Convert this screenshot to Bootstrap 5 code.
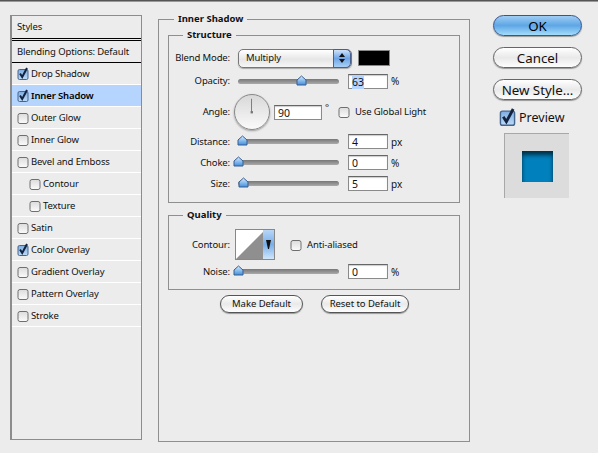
<!DOCTYPE html>
<html lang="en">
<head>
<meta charset="utf-8">
<title>Layer Style</title>
<link href="https://cdn.jsdelivr.net/npm/bootstrap@5.3.0/dist/css/bootstrap.min.css" rel="stylesheet">
<style>
html,body{height:100%}
body{background:#ececec;color:#111;font-family:"Noto Sans","DejaVu Sans",sans-serif;font-size:9.5px;letter-spacing:-.13px;line-height:12px;overflow:hidden;white-space:nowrap}
.dlg{width:598px;height:453px;border-top:1px solid #555;box-shadow:inset 0 1px 0 #999}
.side{width:132px;height:425px;margin:14px 0 0 10px;border:1px solid #8c8c8c;border-left-width:2px;flex:none}
.side-head{height:23px;padding-left:5px;border-bottom:1px solid #000}
.side-blend{height:23px;margin-top:1px;padding-left:5px;border-top:1px solid #000;border-bottom:1px solid #000}
.item{height:22px;padding-left:5px;border-bottom:1px solid #fff;gap:2px}
.item.sub{padding-left:17px}
.item.sel{background:#b5d5ff;font-weight:600;color:#000}
.cb{width:12px;height:12px;flex:none;display:block;overflow:visible}
.centre{width:312px;margin:12px 0 0 16px;flex:none}
fieldset.grp{border:1px solid #8f8f8f;padding:4px 9px 0;margin:0;min-width:0}
fieldset.grp legend{float:none;width:auto;font-size:9.5px;letter-spacing:0;line-height:12px;font-weight:700;margin:0 0 0 6px;padding:0 4px;color:#111}
fieldset.outer{height:429px}
fieldset.box{padding:6px 0 0;height:174px;margin:0}
fieldset.box legend{margin-left:14px}
fieldset.box2{height:81px;margin-top:6px;padding-top:7px}
.rw{display:flex;align-items:center}
.lab{width:61px;text-align:right;flex:none}
.r1{height:22px}.r2{height:24px}.r3{height:38px}.r4{height:21px}.r5{height:33px}
.sel-blend{width:114px;height:19px;margin-left:8px;border:1px solid #777;border-radius:5px;background:linear-gradient(#fff,#e6e6e6 55%,#f6f6f6);padding-left:7px;position:relative;box-shadow:0 1px 1px #aaa;flex:none}
.sel-arrow{position:absolute;right:0;top:-1px;bottom:-1px;width:18px;border:1px solid #4a5f8c;border-radius:0 5px 5px 0;background:linear-gradient(#cfe3fb,#6ea4e6 50%,#a9d0f6);display:flex;align-items:center;justify-content:center}
.swatch{width:32px;height:16px;background:#000;border:1px solid #888;margin-left:6px;flex:none}
.track{width:101px;height:5px;margin-left:8px;border-radius:3px;background:linear-gradient(#777,#aaa);position:relative;flex:none}
.thumb{position:absolute;top:-4px;width:11px;height:11px;display:block}
.num{width:40px;height:15px;margin-left:9px;background:#fff;border:1px solid #8a8a8a;border-top-color:#666;box-shadow:inset 0 1px 1px #ccc;padding-left:3px;line-height:14px;font-size:10.5px;letter-spacing:0;flex:none}
.hl{background:#b5d5ff}
.unit{margin-left:3px;font-size:10px;letter-spacing:0}
.dial{width:36px;height:36px;margin-left:4px;border-radius:50%;border:1px solid #888;background:linear-gradient(#d8d8d8,#fafafa);box-shadow:0 1px 2px #999;flex:none;display:block}
.num2{width:48px;margin-left:4px}
.deg{margin:-8px 0 0 3px}
.ck-wrap{margin-left:9px;gap:5px}
.ck-wide{margin-left:15px}
.contour{width:40px;height:31px;margin-left:5px;border:1px solid #888;display:flex;background:#fff;flex:none}
.contour svg{flex:none;display:block}
.contour-btn{flex:1;background:linear-gradient(#b8d6f7,#78aeea 50%,#cfe6fb);display:flex;align-items:center;justify-content:center}
.pill{border:1px solid #555;border-radius:10px;background:linear-gradient(#fff,#e9e9e9 50%,#fdfdfd);box-shadow:0 1px 1px #999;color:#111;padding:0;font-size:9.5px;letter-spacing:-.05px;line-height:16px;height:18px}
.foot{margin-top:5px;padding-left:52px;gap:18px}
.pill.mk{width:83px}.pill.rs{width:88px}
.right{width:89px;margin:14px 0 0 23px;flex:none}
.big{width:89px;height:21px;font-size:13.3px;letter-spacing:0;line-height:18px;border-radius:11px;margin-bottom:11px;border-color:#666}
.big.ok{background:linear-gradient(#9fcdf4,#5ea6e6 50%,#a3dcfb);border-color:#38568c;color:#000}
.prev{margin:-2px 0 0 6px;gap:3px;font-size:12.5px;letter-spacing:0;line-height:16px}
.prev .cb{width:17px;height:17px}
.pbox{width:65px;height:65px;margin:7px 0 0 11px;background:#dcdcdc;border:1px solid #a8a8a8;border-width:1px 0 0 1px;display:flex;align-items:center;justify-content:center}
.psq{width:31px;height:31px;background:#0080bd;box-shadow:inset 0 4px 4px rgba(0,0,0,.63)}
</style>
</head>
<body>
<svg width="0" height="0" class="d-block" aria-hidden="true">
<defs>
<linearGradient id="gu" x1="0" y1="0" x2="0" y2="1"><stop offset="0" stop-color="#dcdcdc"/><stop offset="1" stop-color="#fbfbfb"/></linearGradient>
<linearGradient id="gc" x1="0" y1="0" x2="0" y2="1"><stop offset="0" stop-color="#7fade2"/><stop offset="1" stop-color="#bcdcf8"/></linearGradient>
<linearGradient id="gt" x1="0" y1="0" x2="0" y2="1"><stop offset="0" stop-color="#d8ecff"/><stop offset="1" stop-color="#3f8fdc"/></linearGradient>
<symbol id="off" viewBox="0 0 12 12"><rect x="1" y="1.500" width="10" height="10" rx="2" fill="url(#gu)" stroke="#6f6f6f"/></symbol>
<symbol id="on" viewBox="0 0 12 12" overflow="visible"><rect x="1" y="1.500" width="10" height="10" rx="1.500" fill="url(#gc)" stroke="#45658f"/><path d="M3 5.500 5.200 9 10 0" fill="none" stroke="#14233f" stroke-width="2"/></symbol>
<symbol id="th" viewBox="0 0 11 11"><path d="M5.500 1 10 5v5H1V5z" fill="url(#gt)" stroke="#3a5d90"/></symbol>
</defs>
</svg>
<div class="dlg d-flex">
  <div class="side">
    <div class="side-head d-flex align-items-center">Styles</div>
    <div class="side-blend d-flex align-items-center">Blending Options: Default</div>
    <div class="item d-flex align-items-center"><svg class="cb"><use href="#on"/></svg>Drop Shadow</div>
    <div class="item sel d-flex align-items-center"><svg class="cb"><use href="#on"/></svg>Inner Shadow</div>
    <div class="item d-flex align-items-center"><svg class="cb"><use href="#off"/></svg>Outer Glow</div>
    <div class="item d-flex align-items-center"><svg class="cb"><use href="#off"/></svg>Inner Glow</div>
    <div class="item d-flex align-items-center"><svg class="cb"><use href="#off"/></svg>Bevel and Emboss</div>
    <div class="item sub d-flex align-items-center"><svg class="cb"><use href="#off"/></svg>Contour</div>
    <div class="item sub d-flex align-items-center"><svg class="cb"><use href="#off"/></svg>Texture</div>
    <div class="item d-flex align-items-center"><svg class="cb"><use href="#off"/></svg>Satin</div>
    <div class="item d-flex align-items-center"><svg class="cb"><use href="#on"/></svg>Color Overlay</div>
    <div class="item d-flex align-items-center"><svg class="cb"><use href="#off"/></svg>Gradient Overlay</div>
    <div class="item d-flex align-items-center"><svg class="cb"><use href="#off"/></svg>Pattern Overlay</div>
    <div class="item d-flex align-items-center"><svg class="cb"><use href="#off"/></svg>Stroke</div>
  </div>
  <div class="centre">
    <fieldset class="grp outer">
      <legend>Inner Shadow</legend>
      <fieldset class="grp box">
        <legend>Structure</legend>
        <div class="rw r1"><span class="lab">Blend Mode:</span>
          <div class="sel-blend d-flex align-items-center">Multiply<span class="sel-arrow"><svg width="8" height="12" viewBox="0 0 8 12"><path d="M4 1 7 5H1zM4 11 1 7h6z" fill="#111"/></svg></span></div>
          <span class="swatch"></span></div>
        <div class="rw r2"><span class="lab">Opacity:</span><div class="track"><svg class="thumb" style="left:58px"><use href="#th"/></svg></div><div class="num"><span class="hl">63</span></div><span class="unit">%</span></div>
        <div class="rw r3"><span class="lab">Angle:</span>
          <svg class="dial" viewBox="0 0 36 36"><path d="M17.500 4v14" stroke="#777" fill="none"/><rect x="16.500" y="17" width="2.500" height="2.500" fill="#777"/></svg>
          <div class="num num2">90</div><span class="deg">°</span>
          <div class="ck-wrap d-flex align-items-center"><svg class="cb"><use href="#off"/></svg>Use Global Light</div></div>
        <div class="rw r4"><span class="lab">Distance:</span><div class="track"><svg class="thumb" style="left:-1px"><use href="#th"/></svg></div><div class="num">4</div><span class="unit">px</span></div>
        <div class="rw r4"><span class="lab">Choke:</span><div class="track"><svg class="thumb" style="left:-5px"><use href="#th"/></svg></div><div class="num">0</div><span class="unit">%</span></div>
        <div class="rw r4"><span class="lab">Size:</span><div class="track"><svg class="thumb" style="left:0"><use href="#th"/></svg></div><div class="num">5</div><span class="unit">px</span></div>
      </fieldset>
      <fieldset class="grp box box2">
        <legend>Quality</legend>
        <div class="rw r5"><span class="lab">Contour:</span>
          <div class="contour"><svg width="27" height="29" viewBox="0 0 27 29"><path d="M0 29 27 2V29z" fill="#8f8f8f"/></svg><span class="contour-btn"><svg width="5" height="9" viewBox="0 0 5 9"><path d="M0 0h5L3 9H2z" fill="#111"/></svg></span></div>
          <div class="ck-wrap ck-wide d-flex align-items-center"><svg class="cb"><use href="#off"/></svg>Anti-aliased</div></div>
        <div class="rw r4"><span class="lab">Noise:</span><div class="track"><svg class="thumb" style="left:-5px"><use href="#th"/></svg></div><div class="num">0</div><span class="unit">%</span></div>
      </fieldset>
      <div class="foot d-flex"><button type="button" class="btn pill mk">Make Default</button><button type="button" class="btn pill rs">Reset to Default</button></div>
    </fieldset>
  </div>
  <div class="right d-flex flex-column">
    <button type="button" class="btn pill big ok">OK</button>
    <button type="button" class="btn pill big">Cancel</button>
    <button type="button" class="btn pill big">New Style...</button>
    <div class="prev d-flex align-items-center"><svg class="cb"><use href="#on"/></svg>Preview</div>
    <div class="pbox"><div class="psq"></div></div>
  </div>
</div>
<script src="https://cdn.jsdelivr.net/npm/bootstrap@5.3.0/dist/js/bootstrap.bundle.min.js"></script>
</body>
</html>
